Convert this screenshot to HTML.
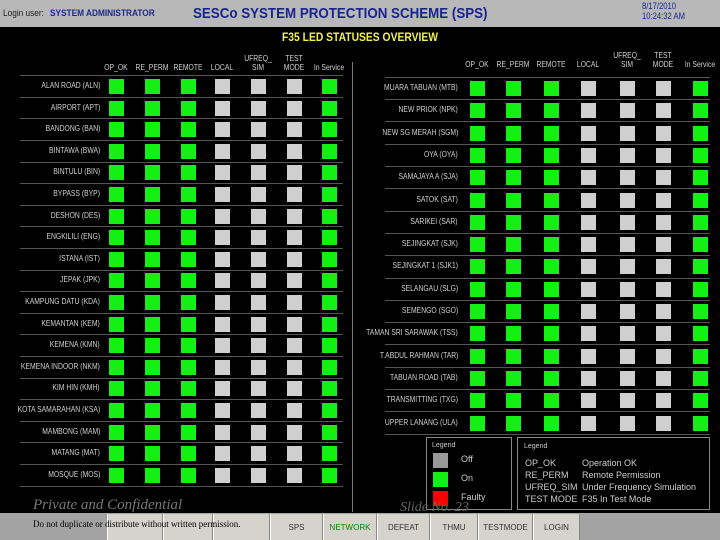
<!DOCTYPE html>
<html><head><meta charset="utf-8"><style>
*{margin:0;padding:0;box-sizing:border-box}
body{width:720px;height:540px;background:#000;position:relative;overflow:hidden;font-family:"Liberation Sans",sans-serif}
.a{position:absolute}
.hdr{left:0;top:0;width:720px;height:27px;background:#b8b8b8}
.sq{position:absolute;width:15px;height:15px}
.g{background:#14f014}
.o{background:#cfcfcf}
.lbl{position:absolute;color:#d0d0d0;font-size:8px;text-align:right;white-space:nowrap;transform:scaleX(0.85);transform-origin:right center}
.hl{position:absolute;height:1px;background:#555}
.ch{position:absolute;color:#d0d0d0;font-size:8px;text-align:center;line-height:9px;width:40px;transform:scaleX(0.85)}
.btn{position:absolute;top:514px;height:26px;background:#d6d3cc;border-left:1px solid #fff;border-right:1px solid #888;font-size:8px;color:#333;padding-top:9px;text-align:center}
</style></head><body>
<div class="a hdr"></div>
<div class="a" style="left:3px;top:8px;font-size:9px;color:#222;transform:scaleX(0.92);transform-origin:left">Login user: <b style="color:#1c2a8a;margin-left:4px">SYSTEM ADMINISTRATOR</b></div>
<div class="a" style="left:193px;top:5px;font-size:15px;font-weight:bold;color:#1a2490;white-space:nowrap;transform:scaleX(0.89);transform-origin:left">SESCo SYSTEM PROTECTION SCHEME (SPS)</div>
<div class="a" style="left:642px;top:1px;font-size:9px;color:#1a2490;line-height:10px;transform:scaleX(0.85);transform-origin:left">8/17/2010<br>10:24:32 AM</div>
<div class="a" style="left:282px;top:30px;font-size:12px;font-weight:bold;color:#f0f050;white-space:nowrap;transform:scaleX(0.86);transform-origin:left">F35 LED STATUSES OVERVIEW</div>
<div class="a" style="left:352px;top:62px;width:1px;height:450px;background:#777"></div>
<div id="c"></div>
<div class="a" style="left:426px;top:437px;width:86px;height:73px;border:1px solid #888"></div>
<div class="a" style="left:432px;top:442px;font-size:7px;color:#ccc">Legend</div>
<div class="sq" style="left:433px;top:453px;background:#999"></div><div class="a" style="left:461px;top:454px;font-size:9px;color:#ccc">Off</div>
<div class="sq" style="left:433px;top:472px;background:#14f014"></div><div class="a" style="left:461px;top:473px;font-size:9px;color:#ccc">On</div>
<div class="sq" style="left:433px;top:491px;background:#f00"></div><div class="a" style="left:461px;top:492px;font-size:9px;color:#ccc">Faulty</div>
<div class="a" style="left:517px;top:437px;width:193px;height:73px;border:1px solid #888"></div>
<div class="a" style="left:524px;top:443px;font-size:7px;color:#ccc">Legend</div>
<div class="a" style="left:525px;top:457px;font-size:9px;color:#ccc;line-height:12px">OP_OK<br>RE_PERM<br>UFREQ_SIM<br>TEST MODE</div>
<div class="a" style="left:582px;top:457px;font-size:9px;color:#ccc;line-height:12px">Operation OK<br>Remote Permission<br>Under Frequency Simulation<br>F35 In Test Mode</div>
<div class="a" style="left:0;top:513px;width:720px;height:27px;background:#a3a3a3"></div>
<div class="btn" style="left:107px;width:56px"></div>
<div class="btn" style="left:163px;width:50px"></div>
<div class="btn" style="left:213px;width:57px"></div>
<div class="btn" style="left:270px;width:53px">SPS</div>
<div class="btn" style="left:323px;width:54px;color:#080">NETWORK</div>
<div class="btn" style="left:377px;width:53px">DEFEAT</div>
<div class="btn" style="left:430px;width:48px">THMU</div>
<div class="btn" style="left:478px;width:55px">TESTMODE</div>
<div class="btn" style="left:533px;width:47px">LOGIN</div>
<div class="a" style="left:33px;top:497px;font-family:'Liberation Serif',serif;font-style:italic;font-size:15px;color:#777">Private and Confidential</div>
<div class="a" style="left:400px;top:500px;font-family:'Liberation Serif',serif;font-style:italic;font-size:14px;color:#666">Slide No. 23</div>
<div class="a" style="left:33px;top:519px;font-family:'Liberation Serif',serif;font-size:9px;color:#000">Do not duplicate or distribute without written permission.</div>
<script>
var c=document.getElementById('c'),h='';
var L=["ALAN ROAD (ALN)","AIRPORT (APT)","BANDONG (BAN)","BINTAWA (BWA)","BINTULU (BIN)","BYPASS (BYP)","DESHON (DES)","ENGKILILI (ENG)","ISTANA (IST)","JEPAK (JPK)","KAMPUNG DATU (KDA)","KEMANTAN (KEM)","KEMENA (KMN)","KEMENA INDOOR (NKM)","KIM HIN (KMH)","KOTA SAMARAHAN (KSA)","MAMBONG (MAM)","MATANG (MAT)","MOSQUE (MOS)"];
var R=["MUARA TABUAN (MTB)","NEW PRIOK (NPK)","NEW SG MERAH (SGM)","OYA (OYA)","SAMAJAYA A (SJA)","SATOK (SAT)","SARIKEI (SAR)","SEJINGKAT (SJK)","SEJINGKAT 1 (SJK1)","SELANGAU (SLG)","SEMENGO (SGO)","TAMAN SRI SARAWAK (TSS)","T.ABDUL RAHMAN (TAR)","TABUAN ROAD (TAB)","TRANSMITTING (TXG)","UPPER LANANG (ULA)"];
var hd=["OP_OK","RE_PERM","REMOTE","LOCAL","UFREQ_<br>SIM","TEST<br>MODE","In Service"];
var lx=[116,152,188,222,258,294,329],rx=[477,513,551,588,627,663,700];
function col(xs,y){hd.forEach(function(t,i){var tt=t.indexOf('<br>')>0;h+='<div class="ch" style="left:'+(xs[i]-20)+'px;top:'+(tt?y-9:y)+'px">'+t+'</div>';});}
col(lx,63);col(rx,60);
function rows(arr,xs,y0,dy,lr,l1,l2){arr.forEach(function(n,i){var y=y0+i*dy;
h+='<div class="lbl" style="right:'+(720-lr)+'px;top:'+(y-5)+'px">'+n+'</div>';
xs.forEach(function(x,j){h+='<div class="sq '+((j<3||j==6)?'g':'o')+'" style="left:'+(x-7)+'px;top:'+(y-7)+'px"></div>';});
h+='<div class="hl" style="left:'+l1+'px;width:'+(l2-l1)+'px;top:'+Math.round(y+dy/2)+'px"></div>';});
h+='<div class="hl" style="left:'+l1+'px;width:'+(l2-l1)+'px;top:'+Math.round(y0-dy/2)+'px"></div>';}
rows(L,lx,86,21.6,100,20,343);
rows(R,rx,88,22.3,458,385,710);
c.innerHTML=h;
</script>
</body></html>
